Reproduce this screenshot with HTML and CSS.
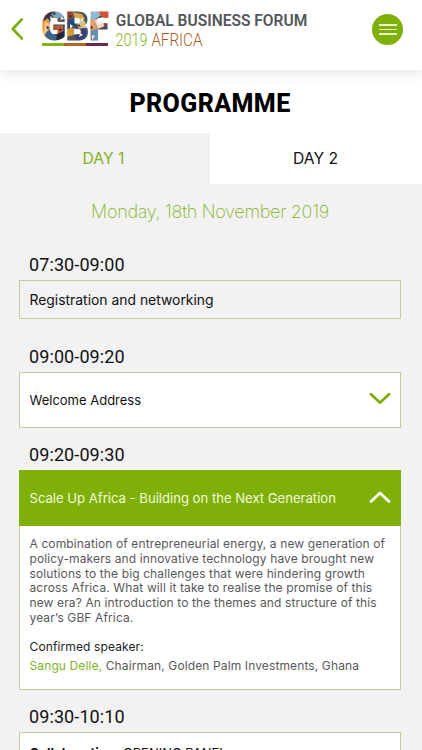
FILE: index.html
```html
<!DOCTYPE html>
<html lang="en">
<head>
    <meta charset="UTF-8">
    <meta name="viewport" content="width=device-width, initial-scale=1.0">
    <title>Programme - Global Business Forum 2019 Africa</title>
    <link rel="stylesheet" href="styles.css">
</head>
<body>
    <header class="header">
        <a class="back" href="#" aria-label="Back">
            <svg width="14" height="24" viewBox="0 0 14 24"><path d="M11.8 2.4 L2.8 12 L11.8 21.4"/></svg>
        </a>
        <svg class="logo" width="280" height="44" viewBox="0 0 280 44">
            <defs>
                <!-- photo collage inside the letters -->
                <pattern id="collage" width="68" height="32" patternUnits="userSpaceOnUse">
                    <rect width="68" height="32" fill="#514b4d"/>
                    <path d="M0 0h12l-3 8-9 5z" fill="#2e3648"/>
                    <path d="M9 4l9-4 5 5-9 5z" fill="#7fa6bd"/>
                    <path d="M0 12l6-4 3 8-4 8-5 2z" fill="#e8973f"/>
                    <path d="M3 11l4 3-1 7-4 3z" fill="#f3c88f"/>
                    <path d="M5 21l7 2 4 6-9 3-5-4z" fill="#3c628a"/>
                    <path d="M12 16l9-1v7l-7 2z" fill="#b85a38"/>
                    <path d="M15 24l7-3v10l-8 1z" fill="#262735"/>
                    <path d="M23 0h9l-1 8-8 3z" fill="#8c4a3a"/>
                    <path d="M31 2l9 2 3 5-9 4z" fill="#d6a64d"/>
                    <path d="M24 10l8-1 3 7-9 3z" fill="#24467a"/>
                    <path d="M35 12l8-1 2 7-8 2z" fill="#d8be84"/>
                    <path d="M23 19l10-1 2 6-10 4z" fill="#d29a38"/>
                    <path d="M33 19l11-1-1 9-8 4z" fill="#333f79"/>
                    <path d="M24 27l8-2 3 7H24z" fill="#4e5363"/>
                    <path d="M46 0h10l3 5-8 6-5-2z" fill="#92b9d3"/>
                    <path d="M56 0h12v10l-9-4z" fill="#d5542f"/>
                    <path d="M46 9l6 1 4 10-10 2z" fill="#e79b67"/>
                    <path d="M52 10l9-3 4 8-9 4z" fill="#f1d9c4"/>
                    <path d="M46 21l9-2v13h-9z" fill="#638eae"/>
                    <path d="M61 10l7-1v8l-6-1z" fill="#884034"/>
                    <path d="M8 6l3 2-2 3zM20 6l2 3-4 1zM28 14l3 2-3 3zM40 7l2 4-4 1zM38 23l3 2-4 2zM50 25l3 1-3 4z" fill="#f4ead8"/>
                    <path d="M4 16l3 1-1 3zM12 2l2 2-3 1zM27 5l3 1-2 2zM37 14l2 3-3-1zM49 15l2 3-3 1zM57 7l2 3-3-1zM18 18l2 2-3 1z" fill="#23242e"/>
                </pattern>
            </defs>
            <text class="logo-mark" x="-0.5" y="30" textLength="67" lengthAdjust="spacingAndGlyphs">GBF</text>
            <rect x="0" y="33" width="22" height="3" fill="#80b313"/>
            <rect x="22" y="33" width="22" height="3" fill="#b36524"/>
            <rect x="44" y="33" width="22" height="3" fill="#6b2a52"/>
            <text class="logo-name" x="73.8" y="15.8" textLength="191.5" lengthAdjust="spacingAndGlyphs">GLOBAL BUSINESS FORUM</text>
            <text class="logo-year" x="73.6" y="36" textLength="32" lengthAdjust="spacingAndGlyphs">2019</text>
            <text class="logo-region" x="109.4" y="36" textLength="51" lengthAdjust="spacingAndGlyphs">AFRICA</text>
        </svg>
        <a class="menu" href="#" aria-label="Menu">
            <span></span>
            <span></span>
            <span></span>
        </a>
    </header>

    <h1>PROGRAMME</h1>

    <nav class="tabs">
        <a class="tab active" href="#">DAY 1</a>
        <a class="tab" href="#">DAY 2</a>
    </nav>

    <main class="programme">
        <p class="date">Monday, 18th November 2019</p>

        <section class="session">
            <h2>07:30-09:00</h2>
            <div class="card plain">
                <div class="card-title">Registration and networking</div>
            </div>
        </section>

        <section class="session after-plain">
            <h2>09:00-09:20</h2>
            <div class="card">
                <div class="card-title">
                    Welcome Address
                    <svg class="chevron" width="22" height="14" viewBox="0 0 22 14"><path d="M2 2.2 L11 10.8 L20 2.2"/></svg>
                </div>
            </div>
        </section>

        <section class="session">
            <h2>09:20-09:30</h2>
            <div class="card open">
                <div class="card-title">
                    Scale Up Africa - Building on the Next Generation
                    <svg class="chevron" width="22" height="14" viewBox="0 0 22 14"><path d="M2 11.4 L11 3 L20 11.4"/></svg>
                </div>
                <div class="card-body">
                    <p>A combination of entrepreneurial energy, a new generation of<br>
                    policy-makers and innovative technology have brought new<br>
                    solutions to the big challenges that were hindering growth<br>
                    across Africa. What will it take to realise the promise of this<br>
                    new era? An introduction to the themes and structure of this<br>
                    year’s GBF Africa.</p>
                    <h3>Confirmed speaker:</h3>
                    <p class="speaker"><a href="#">Sangu Delle,</a> Chairman, Golden Palm Investments, Ghana</p>
                </div>
            </div>
        </section>

        <section class="session">
            <h2>09:30-10:10</h2>
            <div class="card">
                <div class="card-title panel"><span><strong>Collaboration:</strong> OPENING PANEL</span></div>
            </div>
        </section>
    </main>
</body>
</html>
```

FILE: styles.css
```css
* {
    box-sizing: border-box;
}

body {
    margin: 0;
    height: 750px;
    overflow: hidden;
    font-family: Inter, "Liberation Sans", sans-serif;
    color: #111;
    background-color: white;
}

h1, h2, h3, p {
    margin: 0;
}

a {
    color: inherit;
    text-decoration: none;
}

.header {
    display: flex;
    align-items: flex-start;
    height: 70px;
    padding: 0 19px 0 10px;
    background-color: white;
    box-shadow: 0 2px 14px rgba(0,0,0,0.12);
}

.back {
    height: 24px;
    margin-top: 17px;
}

.back svg, .logo {
    display: block;
}

.back path {
    fill: none;
    stroke: #7aaf10;
    stroke-width: 2.8;
    stroke-linecap: round;
    stroke-linejoin: round;
}

.logo {
    margin: 10px 0 0 18px;
    overflow: visible;
}

.logo text {
    font-family: Roboto, "Liberation Sans", sans-serif;
    font-size: 17px;
}

.logo .logo-mark {
    font-size: 38.5px;
    font-weight: 900;
    fill: url(#collage);
    stroke: url(#collage);
    stroke-width: 1px;
}

.logo .logo-name {
    font-weight: 600;
    fill: #55565a;
}

.logo .logo-year {
    font-size: 18px;
    font-weight: 300;
    fill: #83b51d;
}

.logo .logo-region {
    font-size: 18px;
    font-weight: 300;
    fill: #a75a24;
}

.menu {
    display: flex;
    flex-direction: column;
    align-items: center;
    justify-content: center;
    gap: 3px;
    width: 31px;
    height: 31px;
    margin: 14px 0 0 auto;
    border-radius: 50%;
    background-color: #7fb008;
}

.menu span {
    width: 18px;
    height: 1.6px;
    background-color: #eaf5cd;
}

h1 {
    height: 63px;
    padding: 4px 2px 0 0;
    font-family: Roboto, "Liberation Sans", sans-serif;
    font-size: 25px;
    font-weight: 800;
    line-height: 59px;
    letter-spacing: 0.4px;
    text-align: center;
    color: black;
}

.tabs {
    display: flex;
    height: 51px;
}

.tab {
    width: 212px;
    padding-right: 1px;
    line-height: 51px;
    font-size: 15.7px;
    text-align: center;
}

.tab.active {
    width: 210px;
    padding-right: 3px;
    color: #82b31e;
    background-color: #f2f2f2;
}

.programme {
    height: 566px;
    padding: 14px 21px 0 19px;
    overflow: hidden;
    background-color: #f2f2f2;
}

.date {
    height: 28px;
    line-height: 28px;
    font-size: 18px;
    font-weight: 200;
    letter-spacing: -0.3px;
    text-align: center;
    color: #82b321;
}

.session {
    padding-top: 14px;
}

.date + .session {
    padding-top: 26px;
}

.session.after-plain {
    padding-top: 25px;
}

.session h2 {
    height: 28px;
    padding-left: 10px;
    font-family: Roboto, "Liberation Sans", sans-serif;
    font-size: 18px;
    font-weight: 400;
    line-height: 26px;
    letter-spacing: 0.1px;
}

.card {
    border: 1px solid #bbd18f;
    background-color: white;
}

.card-title {
    display: flex;
    align-items: center;
    justify-content: space-between;
    height: 54px;
    padding: 0 9px 0 9.5px;
    font-size: 13px;
}

.card.plain {
    background-color: transparent;
}

.card.plain .card-title {
    height: 37px;
    font-size: 13.9px;
}

.chevron {
    margin-bottom: 2px;
}

.chevron path {
    fill: none;
    stroke: #7fb008;
    stroke-width: 2.8;
    stroke-linecap: round;
    stroke-linejoin: round;
}

.card.open .card-title {
    margin: -1px -1px 0;
    height: 56px;
    padding: 0 10px 0 10.5px;
    font-size: 13.1px;
    color: #f2fadb;
    background-color: #7fb008;
}

.card.open .chevron path {
    stroke: white;
}

.card-body {
    height: 163px;
    padding: 11px 0 0 9.5px;
    font-size: 12px;
    line-height: 14.75px;
    letter-spacing: 0.12px;
    white-space: nowrap;
    color: #58585a;
}

.card-body h3 {
    margin-top: 14px;
    font-size: 12px;
    font-weight: 400;
    color: #222;
}

.speaker {
    margin-top: 5px;
}

.speaker a {
    color: #7fb32a;
}

.card-title.panel {
    align-items: flex-start;
    padding-top: 12px;
}
```
